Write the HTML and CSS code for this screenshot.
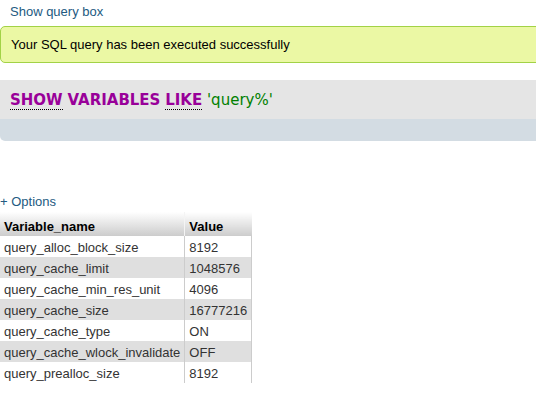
FILE: index.html
```html
<!DOCTYPE html>
<html>
<head>
<meta charset="utf-8">
<link rel="stylesheet" href="styles.css">
</head>
<body>
<div class="top-link"><a href="#">Show query box</a></div>
<div class="success">Your SQL query has been executed successfully</div>
<div class="sql-block">
  <div class="sql-code"><span class="kw abbr">SHOW</span> <span class="kw">VARIABLES</span> <span class="kw abbr">LIKE</span> <span class="str">'query%'</span></div>
  <div class="sql-tools"></div>
</div>
<div class="options"><a href="#">+ Options</a></div>
<table class="data">
  <thead>
    <tr><th>Variable_name</th><th class="val">Value</th></tr>
  </thead>
  <tbody>
    <tr class="odd"><td>query_alloc_block_size</td><td class="val">8192</td></tr>
    <tr class="even"><td>query_cache_limit</td><td class="val">1048576</td></tr>
    <tr class="odd"><td>query_cache_min_res_unit</td><td class="val">4096</td></tr>
    <tr class="even"><td>query_cache_size</td><td class="val">16777216</td></tr>
    <tr class="odd"><td>query_cache_type</td><td class="val">ON</td></tr>
    <tr class="even"><td>query_cache_wlock_invalidate</td><td class="val">OFF</td></tr>
    <tr class="odd"><td>query_prealloc_size</td><td class="val">8192</td></tr>
  </tbody>
</table>
</body>
</html>
```

FILE: styles.css
```css
html, body {
  margin: 0;
  padding: 0;
  overflow: hidden;
}
body {
  font-family: "Liberation Sans", Arial, sans-serif;
  font-size: 13px;
  line-height: 16px;
  color: #000;
  background: #fff;
}
a {
  color: #235a81;
  text-decoration: none;
}
.top-link {
  padding: 4px 10px 0;
}
.success {
  margin-top: 6px;
  width: calc(100% + 20px);
  box-sizing: border-box;
  background: #ebf8a4;
  border: 1px solid #a2d246;
  border-radius: 5px;
  padding: 10px 10px 9px;
}
.sql-block {
  margin-top: 17px;
  width: calc(100% + 20px);
  border-bottom-left-radius: 5px;
  overflow: hidden;
}
.sql-code {
  background: #e5e5e5;
  padding: 11px 10px 9px;
  font-family: "DejaVu Sans", Verdana, sans-serif;
  font-size: 15px;
  line-height: 19px;
}
.kw {
  color: #990099;
  font-weight: bold;
}
.abbr {
  border-bottom: 1px dotted #000;
}
.str {
  color: #008000;
}
.sql-tools {
  background: #d3dce3;
  height: 22px;
}
.options {
  margin-top: 53px;
}
.data {
  margin-top: 2px;
  border-collapse: collapse;
  color: #333;
  line-height: 15px;
}
.data th {
  text-align: left;
  font-weight: bold;
  color: #000;
  padding: 7px 4px 2px;
  background: linear-gradient(#ffffff, #cccccc);
}
.data th.val {
  border-left: 1px solid #f4f4f4;
}
.data td {
  padding: 4px 4px 2px;
  white-space: nowrap;
}
.data td.val {
  border-left: 1px solid #cccccc;
  border-right: 1px solid #cccccc;
}
.data tr.odd td {
  background: #ffffff;
}
.data tr.even td {
  background: #dfdfdf;
}
```
